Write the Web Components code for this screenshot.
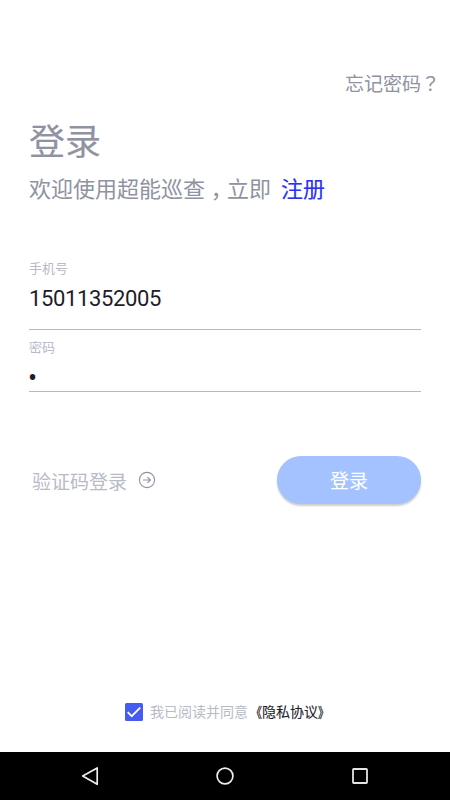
<!DOCTYPE html>
<html lang="zh-CN"><head><meta charset="utf-8"><title>登录</title>
<style>body{margin:0;background:#fff;font-family:Roboto,"Noto Sans CJK SC",sans-serif}</style></head>
<body><login-screen></login-screen>
<script>
const define=(name,html)=>customElements.define(name,class extends HTMLElement{
  constructor(){super();this.attachShadow({mode:'open'}).innerHTML=html}
});
define('login-field',`<style>:host{display:block;border-bottom:1px solid #b8b8c4;box-sizing:border-box;height:var(--field-height);padding-top:var(--field-top,1px)}
.label{font-size:13px;line-height:18px;color:#b8bbc6}.value{color:#1e1c2a;font-size:22px;line-height:28px;margin-top:var(--value-gap,7px);letter-spacing:-.37px}</style><div class="label"><slot name="label"></slot></div><div class="value"><slot></slot></div>`);
define('primary-button',`<style>:host{display:block}button{display:block;width:144px;height:48px;border:0;border-radius:24px;background:#a4c2ff;color:#fff;font:400 19px Roboto,"Noto Sans CJK SC",sans-serif;padding:0 0 1px;box-shadow:0 2px 2px #0003;-webkit-text-stroke:.1px}</style><button><slot></slot></button>`);
define('agreement-row',`<style>:host{display:flex;padding-left:125px;align-items:center;font-size:14px;line-height:20px;color:#b8bbc6}svg{margin-right:7px}b{display:flex;font-weight:400;color:#1e1c2a;-webkit-text-stroke:.1px}.open,.close{width:14px;transform:scaleX(.78);-webkit-text-stroke:.3px}.open{transform-origin:right}.close{transform-origin:left}</style><svg width="18" height="18" viewBox="0 0 18 18"><rect width="18" height="18" rx="1.5" fill="#465bf0"/><path d="M2.7 9.2l4 4 8.5-8.6" fill="none" stroke="#fff" stroke-width="1.8"/></svg><span>我已阅读并同意</span><b><span class="open">《</span><span>隐私协议</span><span class="close">》</span></b>`);
define('navigation-bar',`<style>:host{height:48px;background:#000;display:grid;grid-template-columns:repeat(3,135px);justify-content:center;align-items:center;justify-items:center}</style>
<svg width="24" height="24" viewBox="0 0 24 24" fill="none" stroke="#eee" stroke-width="1.7"><path d="M19.2 3.9v16.4L4.7 12z" stroke-linejoin="round"/></svg><svg width="24" height="24" viewBox="0 0 24 24" fill="none" stroke="#eee" stroke-width="1.7"><circle cx="12" cy="12" r="7.9"/></svg><svg width="24" height="24" viewBox="0 0 24 24" fill="none" stroke="#e4e4e4" stroke-width="1.8"><rect x="5" y="5" width="14" height="14" rx=".7"/></svg>`);
define('login-screen',`<style>:host{display:flex;flex-direction:column;height:800px;width:450px;overflow:hidden}
.forgot{margin:70px 10px 0 0;height:29px;text-align:right;color:#8f92a1;font-size:19px;line-height:26px}.question{font-family:"Noto Sans CJK TC",sans-serif}
main{padding:0 29px}h1{margin:18px 0 0;color:#8f92a1;font-size:36px;line-height:52px;font-weight:400;-webkit-text-stroke:.15px}
.intro{display:flex;margin-top:5px;color:#8f92a1;font-size:22px;line-height:32px;white-space:nowrap}.comma{font-family:"Noto Sans CJK TC",sans-serif;width:22px;transform:translateY(4px)}.intro b{font-weight:400;color:#2b32ef;margin-left:10px;-webkit-text-stroke:.15px}
.fields{margin-top:53px}.phone{--field-height:71px}.password{--field-height:62px;--field-top:9px;--value-gap:7px}.dot{font-size:27px;line-height:28px;margin-left:-1px}.actions{margin-top:64px;display:flex;justify-content:space-between;align-items:center;color:#b8bbc6;font-size:19px}.code{display:flex;align-items:center;margin-left:3px;gap:11px}agreement-row{margin-top:auto;margin-bottom:30px}</style>
<div class="forgot">忘记密码<span class="question" lang="zh-TW">？</span></div><main><h1>登录</h1><div class="intro"><span>欢迎使用超能巡查</span><span class="comma" lang="zh-TW">，</span><span>立即</span><b>注册</b></div>
<div class="fields"><login-field class="phone"><span slot="label">手机号</span>15011352005</login-field><login-field class="password"><span slot="label">密码</span><span class="dot">•</span></login-field></div>
<div class="actions"><span class="code">验证码登录<svg width="18" height="18" viewBox="0 0 18 18" fill="none" stroke="#8f92a1" stroke-width="1.1"><circle cx="9" cy="9" r="7.6"/><path d="M5.2 9h7.2M9.5 6.1L12.4 9l-2.9 2.9"/></svg></span><primary-button>登录</primary-button></div></main><agreement-row></agreement-row><navigation-bar></navigation-bar>`);
</script></body></html>
